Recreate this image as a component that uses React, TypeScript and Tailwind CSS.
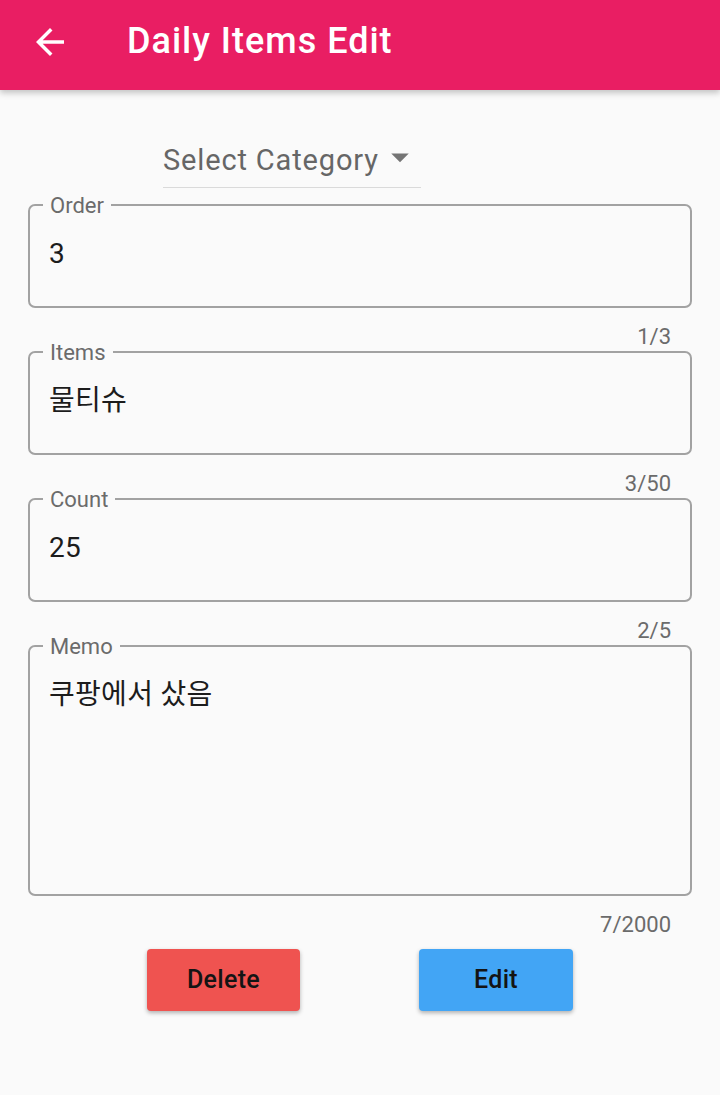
import React from "react";

const fields = [
    {label: "Order", value: "3", counter: "1/3", height: "h-[104px]"},
    {label: "Items", value: "물티슈", counter: "3/50", height: "h-[104px]"},
    {label: "Count", value: "25", counter: "2/5", height: "h-[104px]"},
    {label: "Memo", value: "쿠팡에서 샀음", counter: "7/2000", height: "h-[251px]"},
];

const OutlinedField = ({label, value, counter, height}: {label: string; value: string; counter: string; height: string}) => {
    return (
        <div>
            <div className={`relative ${height} rounded-[7px] border-2 border-[#a2a2a2] pl-[19px] pt-[32px]`}>
                <span className="absolute left-[13px] top-0 -translate-y-1/2 bg-[#fafafa] px-[7px] text-[22px] leading-[22px] text-[#6b6b6b]">
                    {label}
                </span>
                <div className="text-[28px] leading-[32px] tracking-[0.3px] text-[#1c1c1c]">{value}</div>
            </div>
            <div className="flex h-[43px] justify-end pr-[21px] pt-[18px] text-[22px] leading-[22px] text-[#6b6b6b]">
                {counter}
            </div>
        </div>
    );
};

export default function App() {
    return (
        <div className="flex h-[1095px] w-[720px] flex-col bg-[#fafafa] font-['Roboto','Noto_Sans_CJK_KR',sans-serif]">
            <header className="relative z-10 flex h-[90px] items-center bg-[#e91e63] pb-[6px] shadow-[0_3px_6px_rgba(0,0,0,0.22)]">
                <button className="ml-[29px] flex h-[42px] w-[42px] items-center justify-center text-white">
                    <svg viewBox="0 0 24 24" width="42" height="42" fill="currentColor">
                        <path d="M20 11H7.83l5.59-5.59L12 4l-8 8 8 8 1.41-1.41L7.83 13H20v-2z" />
                    </svg>
                </button>
                <h1 className="mb-[2px] ml-[56px] text-[36px] font-medium leading-none tracking-[1px] text-white">Daily Items Edit</h1>
            </header>

            <main className="flex flex-col px-[28px] pt-[36px]">
                <div className="mb-[16px] ml-[135px] flex h-[62px] w-[258px] items-center border-b-[1.5px] border-[#dadada]">
                    <span className="min-w-0 flex-1 whitespace-nowrap pt-[7px] text-[29px] leading-[32px] tracking-[0.85px] text-[#666666]">Select Category</span>
                    <svg className="shrink-0" viewBox="0 0 24 24" width="42" height="42" fill="#757575">
                        <path d="M7 10l5 5 5-5z" />
                    </svg>
                </div>

                {fields.map((f) => (
                    <OutlinedField key={f.label} {...f} />
                ))}

                <div className="mt-[10px] flex justify-evenly">
                    <button className="h-[62px] w-[153px] rounded-[4px] bg-[#ef5350] text-[25px] font-medium tracking-[0.3px] text-[#141414] shadow-[0_2px_4px_rgba(0,0,0,0.3)]">
                        Delete
                    </button>
                    <button className="h-[62px] w-[154px] rounded-[4px] bg-[#42a5f5] text-[25px] font-medium tracking-[0.3px] text-[#141414] shadow-[0_2px_4px_rgba(0,0,0,0.3)]">
                        Edit
                    </button>
                </div>
            </main>
        </div>
    );
}
